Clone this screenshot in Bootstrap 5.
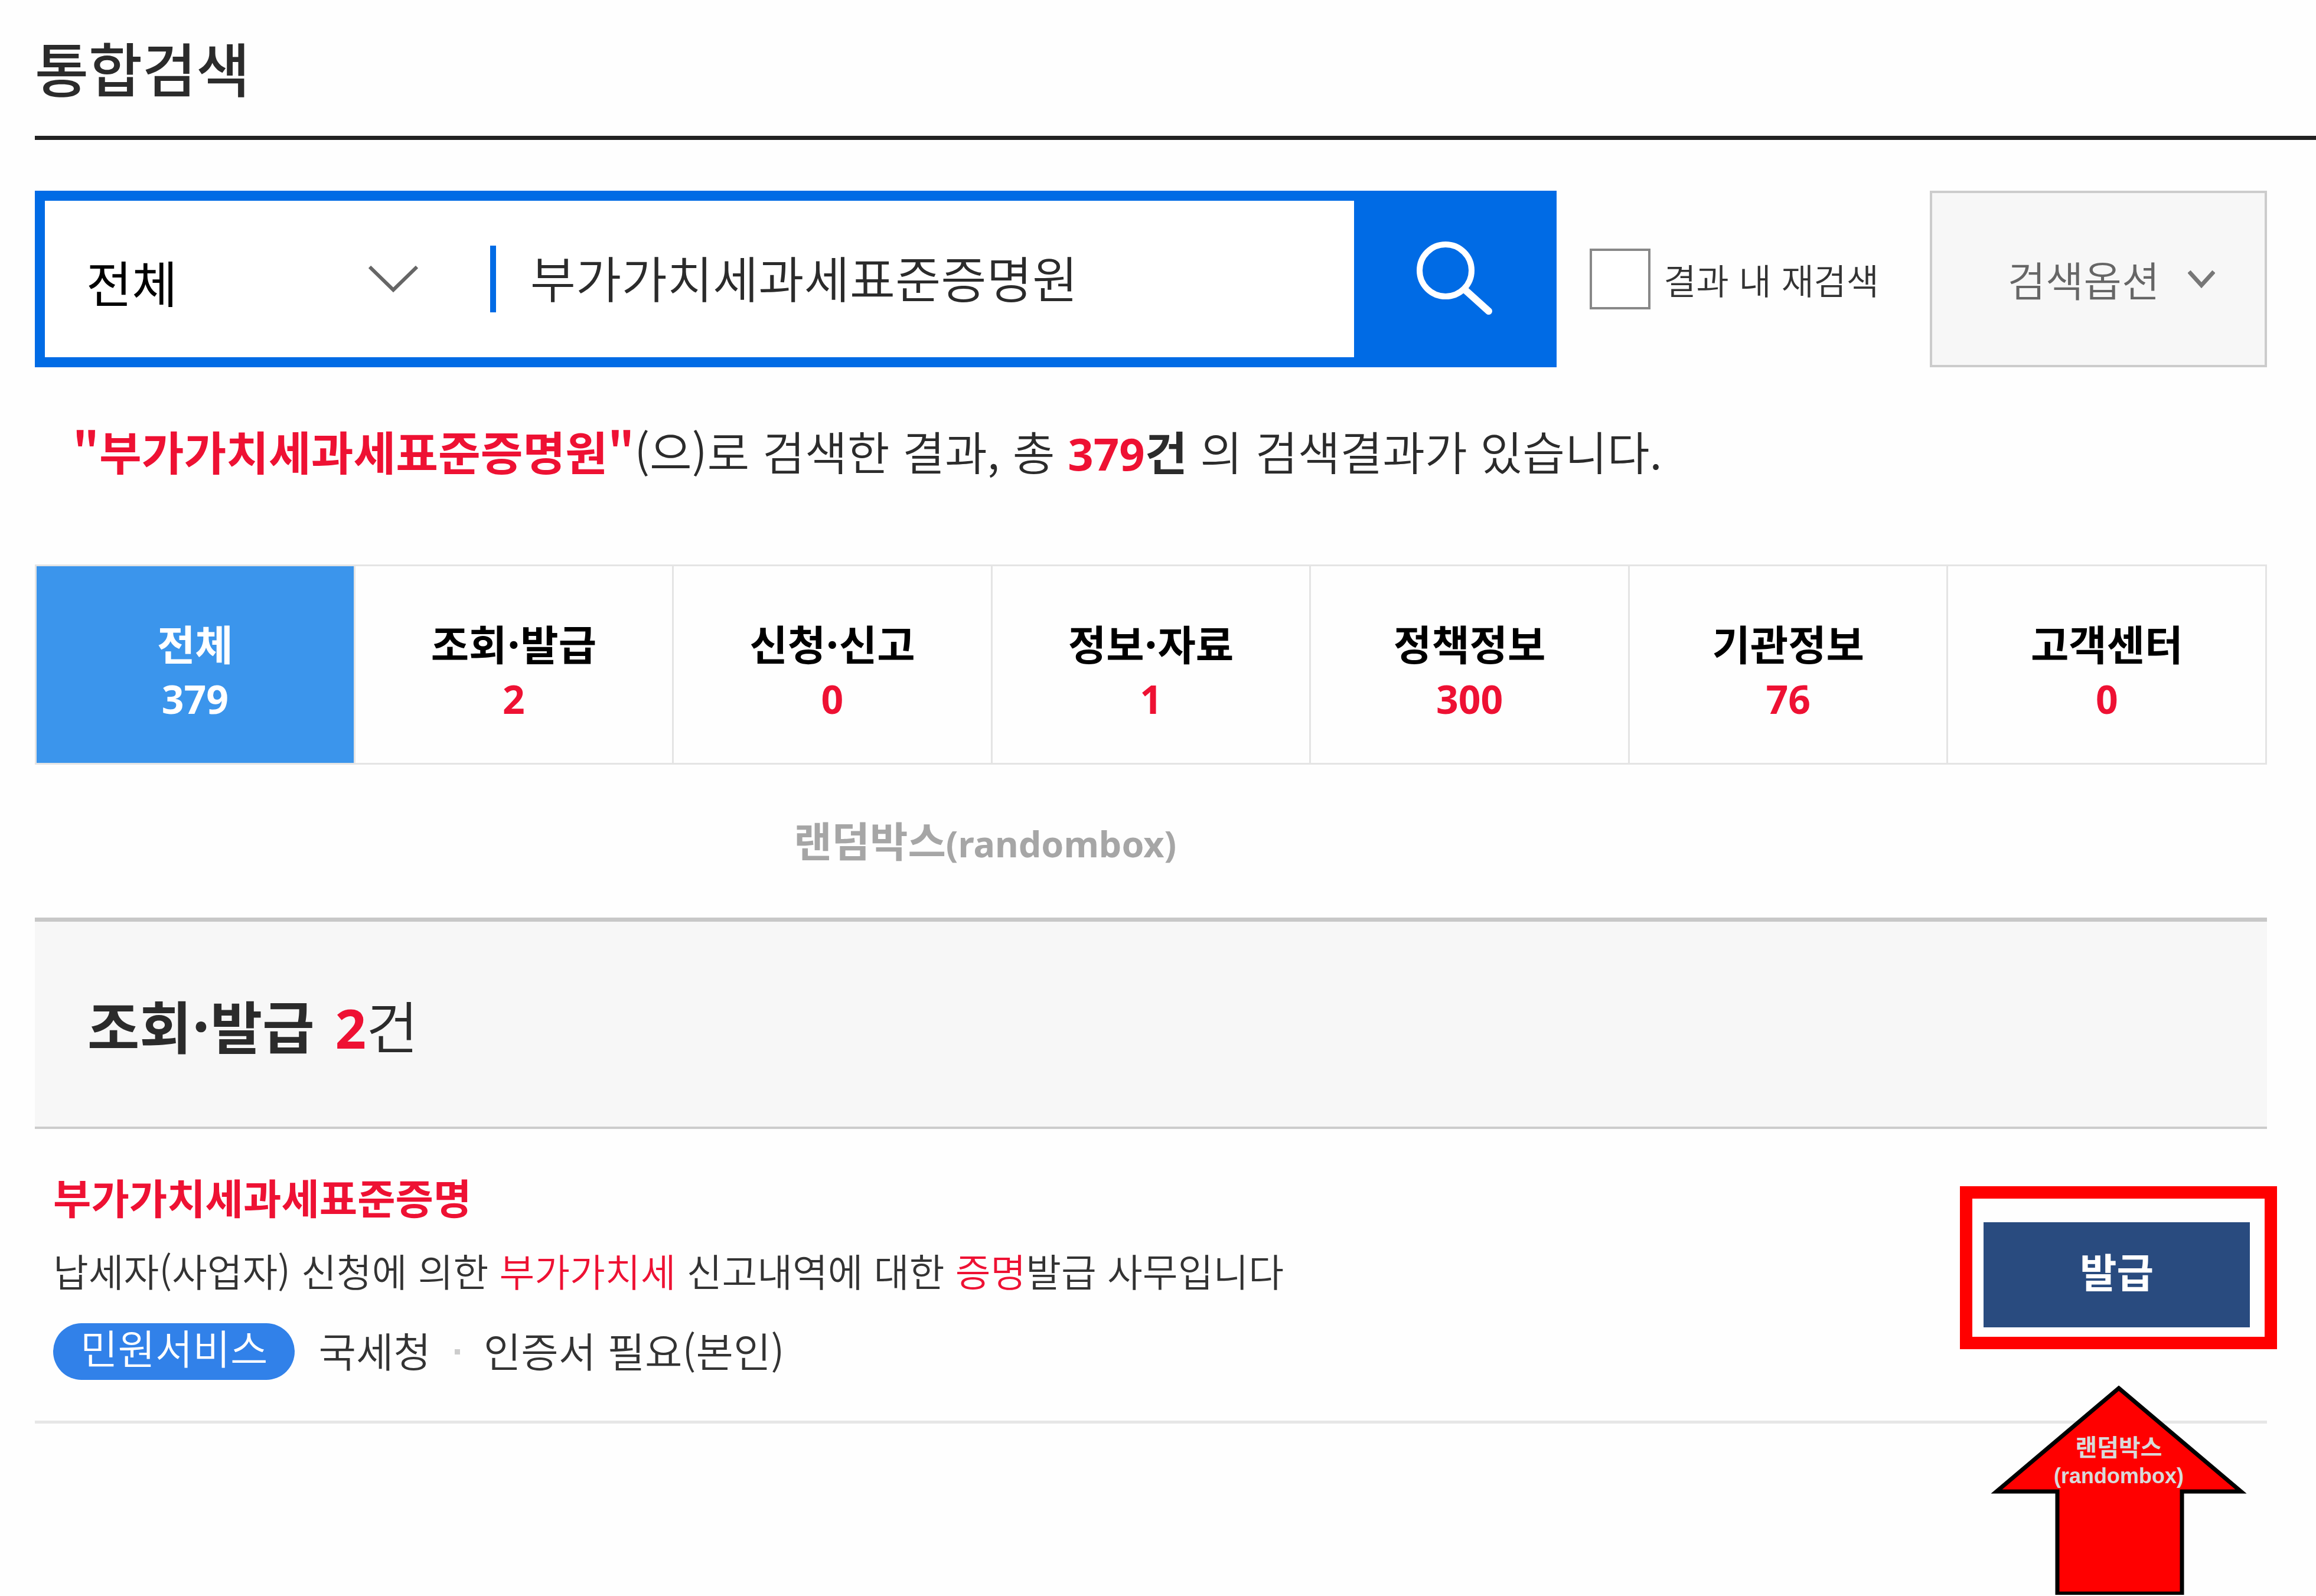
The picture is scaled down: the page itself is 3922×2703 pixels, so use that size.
<!DOCTYPE html>
<html lang="ko">
<head>
<meta charset="utf-8">
<meta name="viewport" content="width=device-width, initial-scale=1">
<title>통합검색</title>
<link href="https://cdn.jsdelivr.net/npm/bootstrap@5.3.0/dist/css/bootstrap.min.css" rel="stylesheet">
<style>
  body { font-family: "Noto Sans CJK KR", sans-serif; color: #2b2b2b; background: #fefefe; }
  .stack { display: grid; }
  .stack > * { grid-area: 1 / 1; }
  .hot { color: #ee1133; }
  .thin { font-weight: 350; }
  .num { font-family: "Noto Sans", sans-serif; font-weight: 700; line-height: 1; }

  .page-head { margin-left: 59px; padding: 49px 0 53px; border-bottom: 7px solid #222; }
  .page-title { font-size: 99px; line-height: 128px; font-weight: 500; }
  .page-body { padding: 86px 83px 290px 59px; }

  .search-row { height: 299px; }
  .search-box { border: 17px solid #006be5; border-right: 0; background: #fff; }
  .scope { flex: 0 0 34%; }
  .scope-select { appearance: none; border: 0; background: transparent; color: #000; font-size: 84px; padding: 8px 0 0 70px; width: 100%; }
  .scope-arrow { justify-self: end; align-self: center; margin: 0 122px 0 0; pointer-events: none; }
  .scope-rule { width: 10px; height: 113px; background: #006be5; }
  .keyword { border: 0; background: transparent; color: #2b2b2b; font-size: 84px; padding: 0 0 8px 58px; min-width: 0; }
  .search-btn { width: 343px; background: #006be5; border: 0; border-radius: 0; padding: 0 4px 4px 0; }
  .recheck { margin: 0 86px 0 56px; gap: 22px; color: #333; font-size: 60px; }
  .recheck .form-check-input { width: 103px; height: 103px; margin: 0; border: 4px solid #888; border-radius: 0; }
  .option-btn { width: 571px; border: 4px solid #ccc; border-radius: 0; background: #f7f7f7; color: #666; font-size: 70px; padding: 0 0 0 44px; gap: 48px; }

  .summary { margin: 81px 0 0 64px; font-size: 78px; line-height: 120px; }
  .summary .num { font-size: 76px; }
  .tabs { margin-top: 133px; border: 3px solid #e4e4e4; }
  .tab-item { padding: 85px 0 68px; line-height: 90px; font-size: 70px; font-weight: 700; color: #000; border-left: 3px solid #e4e4e4; }
  .tab-item:first-child { border-left: 0; }
  .tab-item.active { background: #3b95ec; color: #fff; }
  .tab-item .num { font-size: 66px; }
  .watermark { margin: 77px 0 82px; padding-left: 34%; font-size: 70px; line-height: 100px; font-weight: 700; color: #a6a6a6; }
  .watermark .num { font-size: 61px; }

  .group-head { height: 358px; padding-left: 89px; background: #f7f7f7; border-top: 7px solid #c8c8c8; border-bottom: 4px solid #ccc; }
  .group-title { font-size: 96px; line-height: 128px; }
  .group-title .num { font-size: 92px; }
  .result { padding: 65px 0 69px 31px; border-bottom: 5px solid #e6e6e6; }
  .result-title { font-size: 70px; line-height: 100px; }
  .result-text { margin: 12px 0 28px; font-size: 65px; line-height: 124px; color: #333; }
  .result-meta { gap: 40px; font-size: 69px; line-height: 90px; color: #333; }
  .kind { border-radius: 48px; background: #3181e9; color: #fff; padding: 0 46px 16px; line-height: 80px; }
  .dot { width: 9px; height: 9px; background: #ccc; align-self: center; }
  .issue-frame { margin: 32px -17px 0 0; border: 21px solid #f00; padding: 40px 25px 16px 19px; }
  .issue-btn { width: 451px; height: 178px; border: 0; border-radius: 0; background: #294b7f; color: #fff; font-size: 68px; font-weight: 700; padding: 0 0 14px; }
  .pointer { right: 34px; top: 434px; width: 434px; height: 357px; }
  .pointer-text { padding-top: 80px; font-size: 40px; line-height: 46px; font-weight: 700; color: #d9d9d9; }
  .pointer-latin { font-family: "Liberation Sans", sans-serif; font-size: 36px; line-height: 1; }
</style>
</head>
<body>
<header class="page-head"><h1 class="page-title m-0">통합검색</h1></header>

<main class="page-body">
  <form class="search-row d-flex" role="search">
    <div class="search-box d-flex align-items-center flex-grow-1">
      <div class="scope stack">
        <select class="scope-select" aria-label="검색 범위"><option>전체</option></select>
        <svg class="scope-arrow" width="84" height="46" viewBox="0 0 84 46" fill="none" stroke="#666" stroke-width="6" aria-hidden="true"><path d="M2 2 42 41 82 2"/></svg>
      </div>
      <span class="scope-rule"></span>
      <input class="keyword thin flex-grow-1" type="text" aria-label="검색어" value="부가가치세과세표준증명원">
    </div>
    <button class="btn search-btn" type="button" aria-label="검색">
      <svg width="130" height="126" viewBox="0 0 130 126" fill="none" stroke="#fff" stroke-width="10" aria-hidden="true"><circle cx="50" cy="50" r="44"/><path d="M82 82 123 119" stroke-width="12" stroke-linecap="round"/></svg>
    </button>
    <div class="recheck thin d-flex align-items-center">
      <input class="form-check-input" type="checkbox" id="again">
      <label for="again">결과 내 재검색</label>
    </div>
    <button class="btn option-btn thin d-flex align-items-center justify-content-center" type="button">검색옵션
      <svg width="46" height="32" viewBox="0 0 46 32" fill="none" stroke="#777" stroke-width="7" aria-hidden="true"><path d="M2 3 23 26 44 3"/></svg>
    </button>
  </form>

  <p class="summary thin mb-0"><strong class="hot fw-bold">"부가가치세과세표준증명원"</strong>(으)로 검색한 결과, 총 <strong class="fw-bold"><span class="hot num">379</span>건</strong> 의 검색결과가 있습니다.</p>

  <nav class="tabs row g-0 text-center">
    <a href="#" class="tab-item active col text-decoration-none">전체<br><span class="num">379</span></a>
    <a href="#" class="tab-item col text-decoration-none">조회·발급<br><span class="hot num">2</span></a>
    <a href="#" class="tab-item col text-decoration-none">신청·신고<br><span class="hot num">0</span></a>
    <a href="#" class="tab-item col text-decoration-none">정보·자료<br><span class="hot num">1</span></a>
    <a href="#" class="tab-item col text-decoration-none">정책정보<br><span class="hot num">300</span></a>
    <a href="#" class="tab-item col text-decoration-none">기관정보<br><span class="hot num">76</span></a>
    <a href="#" class="tab-item col text-decoration-none">고객센터<br><span class="hot num">0</span></a>
  </nav>

  <p class="watermark">랜덤박스<span class="num">(randombox)</span></p>

  <section>
    <div class="group-head d-flex align-items-center">
      <h2 class="group-title fw-bold m-0">조회·발급 <span class="hot num ms-2">2</span><span class="thin">건</span></h2>
    </div>
    <article class="result position-relative d-flex justify-content-between align-items-start">
      <div>
        <h3 class="result-title m-0 fw-bold"><a href="#" class="hot text-decoration-none">부가가치세과세표준증명</a></h3>
        <p class="result-text thin">납세자(사업자) 신청에 의한 <span class="hot">부가가치세</span> 신고내역에 대한 <span class="hot">증명</span>발급 사무입니다</p>
        <div class="result-meta thin d-flex align-items-start">
          <span class="kind">민원서비스</span><span>국세청</span><span class="dot"></span><span>인증서 필요(본인)</span>
        </div>
      </div>
      <div class="issue-frame"><button class="btn issue-btn d-block" type="button">발급</button></div>
      <div class="pointer position-absolute stack">
        <svg width="434" height="357" viewBox="0 0 434 357" aria-hidden="true"><path d="M217 5 424 180H324V353H113V180H10Z" fill="#f00" stroke="#000" stroke-width="7"/></svg>
        <div class="pointer-text text-center">랜덤박스<br><span class="pointer-latin">(randombox)</span></div>
      </div>
    </article>
  </section>
</main>
<script src="https://cdn.jsdelivr.net/npm/bootstrap@5.3.0/dist/js/bootstrap.bundle.min.js"></script>
</body>
</html>
